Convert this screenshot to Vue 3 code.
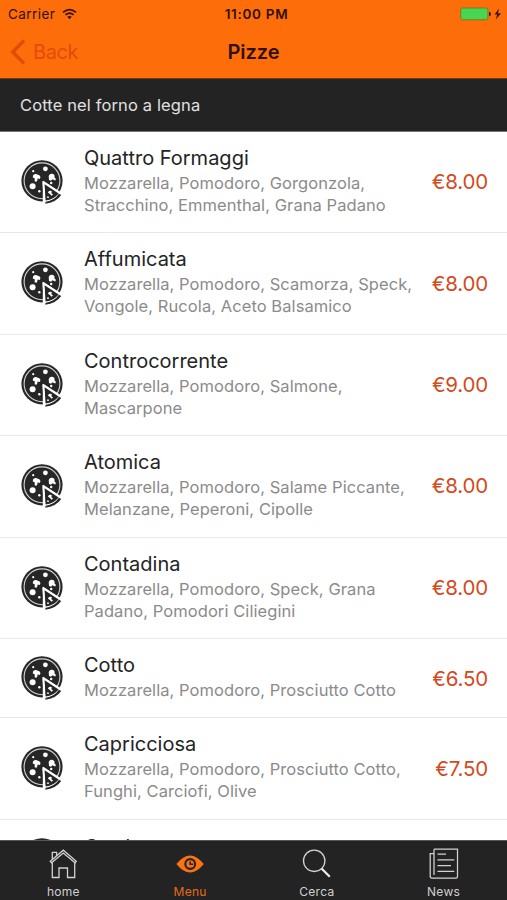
<script setup>
const pizzas = [
  { name: 'Quattro Formaggi', lines: ['Mozzarella, Pomodoro, Gorgonzola,', 'Stracchino, Emmenthal, Grana Padano'], price: '€8.00' },
  { name: 'Affumicata', lines: ['Mozzarella, Pomodoro, Scamorza, Speck,', 'Vongole, Rucola, Aceto Balsamico'], price: '€8.00' },
  { name: 'Controcorrente', lines: ['Mozzarella, Pomodoro, Salmone,', 'Mascarpone'], price: '€9.00' },
  { name: 'Atomica', lines: ['Mozzarella, Pomodoro, Salame Piccante,', 'Melanzane, Peperoni, Cipolle'], price: '€8.00' },
  { name: 'Contadina', lines: ['Mozzarella, Pomodoro, Speck, Grana', 'Padano, Pomodori Ciliegini'], price: '€8.00' },
  { name: 'Cotto', lines: ['Mozzarella, Pomodoro, Prosciutto Cotto'], price: '€6.50' },
  { name: 'Capricciosa', lines: ['Mozzarella, Pomodoro, Prosciutto Cotto,', 'Funghi, Carciofi, Olive'], price: '€7.50' },
  { name: 'Cruda', lines: [], price: '' },
]
</script>

<template>
  <div class="screen">
    <header class="top">
      <div class="status">
        <div class="carrier">
          <span>Carrier</span>
          <svg class="wifi" viewBox="0 0 16 12" fill="none" stroke="#3a1503" stroke-width="1.9">
            <path d="M1 4.3Q8-1.6 15 4.3" />
            <path d="M3.6 7Q8 3.3 12.4 7" />
            <path d="M5.6 9 Q8 7 10.4 9L8 11.5Z" fill="#3a1503" stroke="none" />
          </svg>
        </div>
        <div class="time">11:00 PM</div>
        <div class="power">
          <svg class="battery" viewBox="0 0 42 14">
            <rect x="0.7" y="1" width="27.2" height="11.8" rx="1.8" fill="#46d653" stroke="#7c7c19" stroke-width="1" />
            <path d="M29 4.8Q31 5.3 31 7T29 9.2Z" fill="#3a1503" />
            <path d="M39 1.5L34.5 7.5H37.2L35.8 12.5L41 6.2H38Z" fill="#3a1503" />
          </svg>
        </div>
      </div>
      <nav class="navbar">
        <div class="back">
          <svg viewBox="0 0 16 26" fill="none" stroke="#e44a0a" stroke-width="3.4"><path d="M14 1.5L2.8 13L14 24.5" /></svg>
          <span>Back</span>
        </div>
        <h1>Pizze</h1>
        <div></div>
      </nav>
    </header>
    <div class="section"><span>Cotte nel forno a legna</span></div>
    <main class="list">
      <article v-for="p in pizzas" :key="p.name" class="row" :class="{ short: p.lines.length < 2 }">
        <svg class="pizza" viewBox="0 0 44 46">
          <circle cx="22" cy="21.8" r="20.6" fill="#262626" />
          <circle cx="22" cy="21.8" r="17.9" fill="none" stroke="#d4d4d4" stroke-width="1.1" />
          <g fill="#fff">
            <circle cx="25.4" cy="9.8" r="2.4" />
            <circle cx="12.6" cy="27.2" r="3" />
            <circle cx="13.2" cy="12.2" r="1.1" />
            <circle cx="19.3" cy="32.2" r="1.2" />
            <circle cx="31.2" cy="24" r="1.2" />
            <path d="M12.8 18.5a3 3 0 0 1 5-2.7a2.5 2.5 0 0 1 1.8 4.3l-2-.5l-.6 3h-2.3v-3.4Z" />
            <path d="M28.8 18.5a3 3 0 0 1 3.4-3.8a3 3 0 0 1 2.2 3.8a2 2 0 0 1 .8 3l-2.8-1.3l-1.4 1.5l-2-.8Z" />
          </g>
          <path d="M22.8 22L43 34.8L38 41L25 46L22.8 46Z" fill="#fff" />
          <path d="M24.6 25.2L38.6 34.4Q34 40.5 25.5 41.6Z" fill="#262626" />
          <path d="M39 34.8L41.2 36.1Q36 43.8 25 44.8L24.8 42.9Q34 42.2 39 34.8Z" fill="#262626" />
          <path d="M22.9 22.4L41.2 34.2M22.9 22.4L24.9 44.6" fill="none" stroke="#fff" stroke-width="1.3" />
          <path d="M28 33.7a2.2 2.2 0 0 1 4-1l-.8 1.4l1.8 1.5l-1.5 1.2l-1.8-2Z" fill="#fff" />
          <circle cx="28" cy="38.2" r=".9" fill="#fff" />
        </svg>
        <div class="info">
          <h2>{{ p.name }}</h2>
          <p v-for="line in p.lines" :key="line">{{ line }}</p>
        </div>
        <div class="price">{{ p.price }}</div>
      </article>
    </main>
    <footer class="tabs">
      <div class="tab">
        <svg viewBox="0 0 32 32" fill="none" stroke="#d2d2d2" stroke-width="1.3">
          <path d="M3.3 13.3L16.3 2.2L29.3 13.3L28.1 14.8L16.3 5L4.5 14.8Z" />
          <path d="M5.3 14.5V29.5H12V20H20.5V29.5H27.7V14.5M5.3 11.3V4.4H9.6V7.8" />
        </svg>
        <span>home</span>
      </div>
      <div class="tab active">
        <svg viewBox="0 0 32 32">
          <path d="M2.4 16Q16-1 29.8 16Q16 33 2.4 16Z" fill="#f97316" />
          <circle cx="16.2" cy="16" r="4.9" fill="none" stroke="#262320" stroke-width="2.1" />
          <path d="M16.2 13.4V16.2H19.2" fill="none" stroke="#262320" stroke-width="1.6" />
        </svg>
        <span>Menu</span>
      </div>
      <div class="tab">
        <svg viewBox="0 0 32 32" fill="none" stroke="#d2d2d2">
          <circle cx="13.2" cy="12.8" r="10.7" stroke-width="1.3" />
          <path d="M20.5 20.5L28.8 28.8" stroke="#eee" stroke-width="2.2" />
        </svg>
        <span>Cerca</span>
      </div>
      <div class="tab">
        <svg viewBox="0 0 32 32" fill="none" stroke="#d2d2d2" stroke-width="1.25">
          <path d="M6 1.2H29.5V28.5Q29.5 30.2 28 30.2H4Q2.2 30.2 2.2 28V5.5H5.8M6 1.2V27" />
          <path d="M9.5 6.2H18M9.5 11.8H26.3M9.5 17.5H23M9.5 23.4H26.3" />
        </svg>
        <span>News</span>
      </div>
    </footer>
  </div>
</template>

<style>
body { margin: 0; overflow: hidden; }
</style>

<style scoped>
* { box-sizing: border-box; }
.screen { width: 507px; height: 900px; display: flex; flex-direction: column; overflow: hidden; background: #fff; font-family: Inter, "Liberation Sans", sans-serif; }
.top { height: 79px; flex: none; background: #fd6e0a; color: #301003; border-bottom: 1px solid #733812; }
.status { height: 27px; padding: 0 5px 0 8px; display: grid; grid-template-columns: 1fr auto 1fr; align-items: center; font-size: 13.5px; }
.carrier { display: flex; align-items: center; gap: 7px; letter-spacing: .45px; }
.wifi { width: 15px; height: 12px; }
.time { font-weight: 600; letter-spacing: .7px; padding-left: 3px; }
.power { display: flex; justify-content: flex-end; }
.battery { width: 42px; height: 14px; }
.navbar { height: 50px; padding: 0 10px; display: grid; grid-template-columns: 1fr auto 1fr; align-items: center; }
.back { display: flex; align-items: center; gap: 7px; color: #e44a0a; font-size: 20px; letter-spacing: -.4px; }
.back svg { width: 16px; height: 26px; }
h1 { margin: 0; font-size: 20px; font-weight: 600; }
.section { height: 53px; flex: none; padding-left: 20px; display: flex; align-items: center; background: #232323; color: #e0e0e0; font-size: 16.5px; letter-spacing: .13px; border-bottom: 1px solid #777; }
.list { flex: 1; min-height: 0; overflow: hidden; }
.row { height: 101.4px; padding: 12px 19px 0 20px; display: grid; grid-template-columns: 64px 1fr auto; align-items: start; border-bottom: 1px solid #e8e8e8; }
.row.short { height: 79.4px; }
.row:last-child { padding-top: 13px; }
.pizza { width: 44px; height: 46px; margin-top: 15px; }
.row.short .pizza { margin-top: 4px; }
.info { min-width: 0; white-space: nowrap; }
h2 { margin: 0; font-size: 20px; line-height: 28px; font-weight: 400; color: #242424; }
p { margin: 0; font-size: 16.5px; line-height: 22px; letter-spacing: .07px; color: #8b8b8b; }
.price { margin-top: 24.3px; font-size: 20.5px; line-height: 28px; letter-spacing: -.2px; color: #d44a1d; }
.row.short .price { margin-top: 13.6px; }
.tabs { height: 60px; flex: none; display: grid; grid-template-columns: repeat(4, 1fr); background: #232323; border-top: 1px solid #555; }
.tab { display: flex; flex-direction: column; align-items: center; padding-top: 7px; color: #d0d0d0; font-size: 12px; }
.tab svg { width: 32px; height: 32px; }
.tab span { line-height: 16px; margin-top: 4px; letter-spacing: .3px; }
.tab.active { color: #e96a16; }
</style>
